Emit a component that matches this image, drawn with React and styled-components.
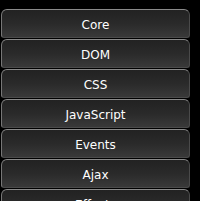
import React from 'react';
import styled, { createGlobalStyle } from 'styled-components';

const Global = createGlobalStyle`
    body {
        margin: 0;
        background: #000;
        font-family: "DejaVu Sans", Verdana, sans-serif;
    }
`

const items = ['Core', 'DOM', 'CSS', 'JavaScript', 'Events', 'Ajax', 'Effects'];

export default function App() {
  return (
    <>
        <Global />
        <Menu>
            {items.map((label) => (
                <Item key={label}>{label}</Item>
            ))}
        </Menu>
    </>
  )
}

const Menu = styled.nav`
    display: flex;
    flex-direction: column;
    gap: 1px;
    width: 189px;
    padding: 9px 0 0 1px;
    height: 192px;
    overflow: hidden;
`

const Item = styled.a`
    flex-shrink: 0;
    display: flex;
    align-items: center;
    justify-content: center;
    box-sizing: border-box;
    height: 29px;
    padding-top: 3px;
    border: 1px solid #4a4a4a;
    border-top-color: #8a8a8a;
    border-left-color: #777;
    border-radius: 6px 6px 3px 3px;
    background: linear-gradient(to bottom, #222 0%, #2a2a2a 50%, #393939 100%);
    color: #fff;
    font-size: 12px;
    cursor: pointer;
`
